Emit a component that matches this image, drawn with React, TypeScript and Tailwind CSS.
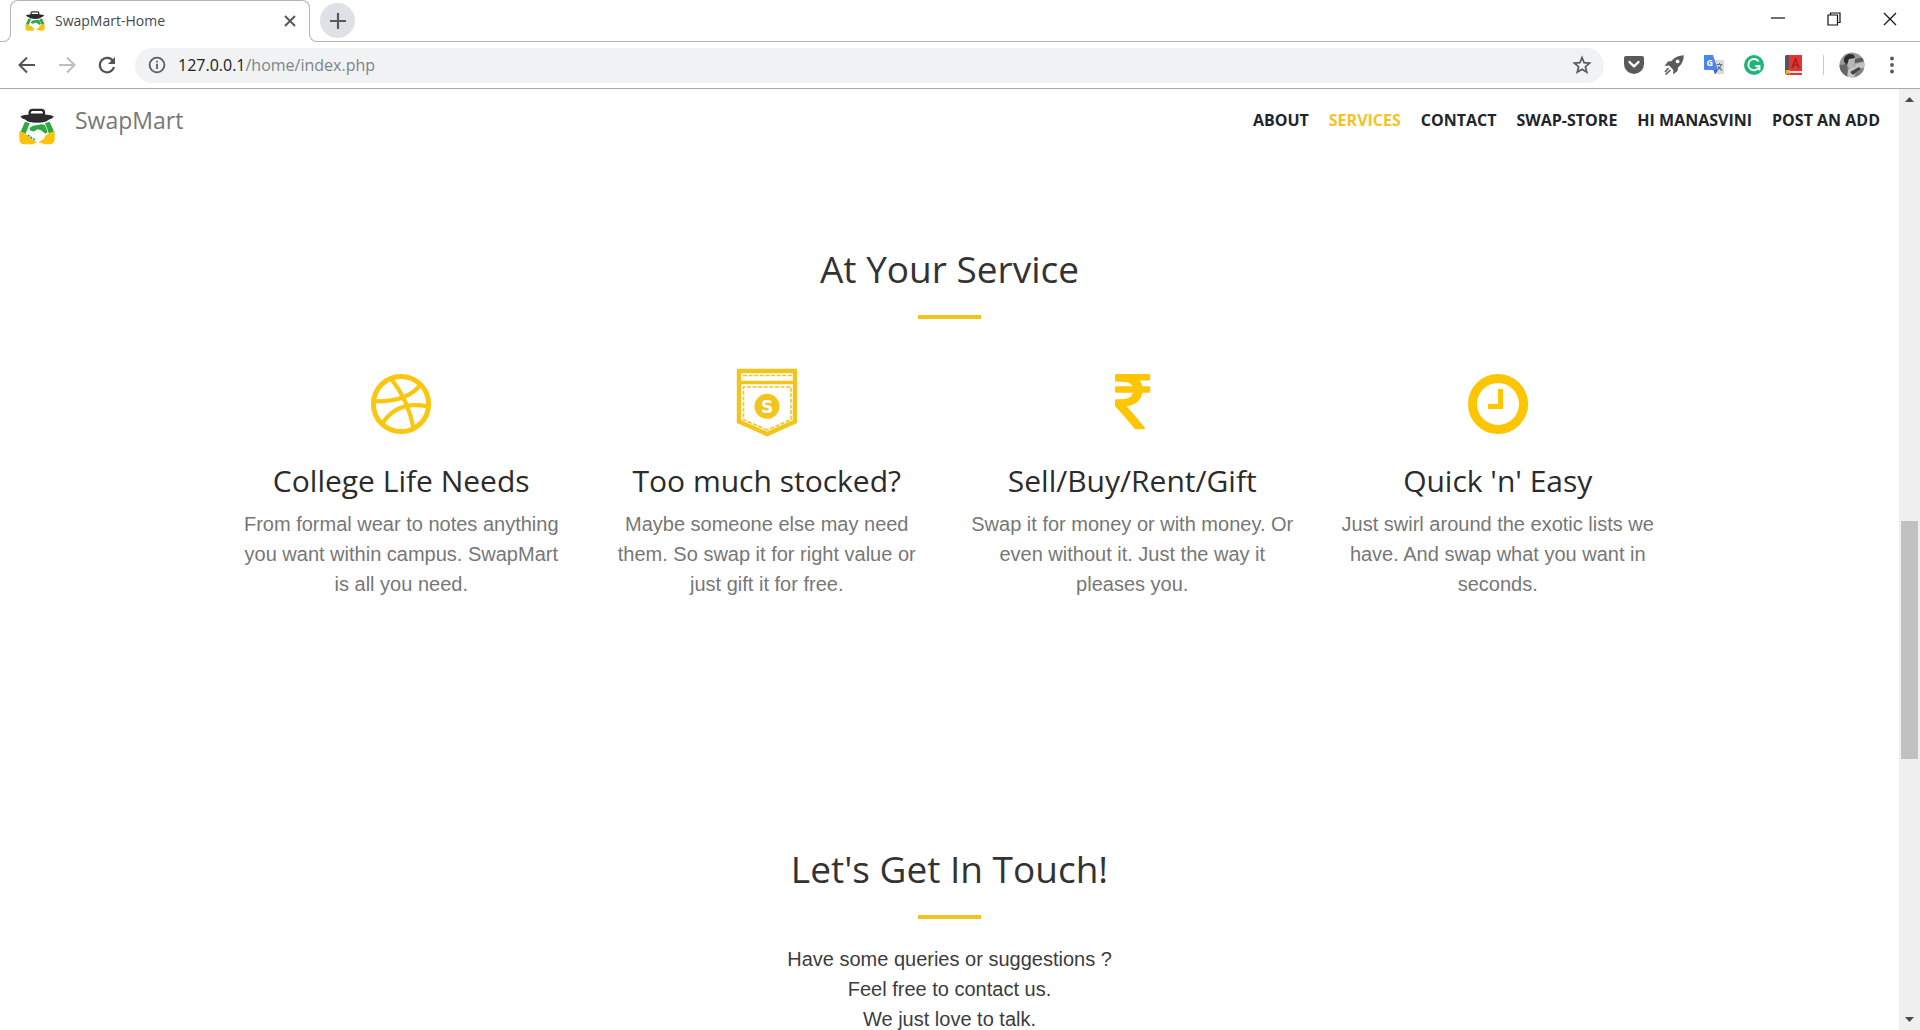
import React from 'react';

function Logo({ className }: { className: string }) {
  return (
    <svg viewBox="56 325 108 110" className={className} aria-hidden="true">
      <path d="M88 347V338Q88 330 97 330H123Q131 330 131 338V347" fill="none" stroke="#2c2c30" strokeWidth="7" />
      <path d="M60 350Q68 344 84 345L90 341H130L136 345Q152 344 161 350Q156 357 145 360L138 365Q111 373 82 365L76 360Q64 357 60 350Z" fill="#2c2c30" />
      <path d="M74 366L88 370L76 402L60 398Z" fill="#2fa745" />
      <path d="M134 370L148 366L162 397L146 402Z" fill="#2fa745" />
      <path d="M88 384Q98 375 109 376L122 373Q130 373 134 376L142 397L135 402Q122 389 112 388L100 395L89 392Z" fill="#2fa745" />
      <path d="M57 393L74 400L86 411Q98 423 110 428L104 430L98 433H70Q57 432 57 418Z" fill="#fcc30c" />
      <path d="M163 393L146 400L136 406L131 417L114 427L126 430L132 433H150Q163 432 163 418Z" fill="#fcc30c" />
      <path d="M83 405L88 410M91 411L95 416M99 416L103 421" stroke="#2fa745" strokeWidth="5" />
    </svg>
  );
}

const iconClass = 'mx-auto size-[72px]';

function BallIcon() {
  return (
    <svg viewBox="0 0 72 72" className={iconClass} fill="none" stroke="#fac60f" strokeWidth="4.2" aria-hidden="true">
      <circle cx="36" cy="36" r="27.6" strokeWidth="5" />
      <path d="M9 33.3Q43 34 55.5 16.5" />
      <path d="M26.5 11Q44 34 48.7 61" />
      <path d="M17 56Q32 32 63 38.5" />
    </svg>
  );
}

function PocketIcon() {
  return (
    <svg viewBox="0 0 72 72" className={iconClass} aria-hidden="true">
      <g fill="none" stroke="#f3c51c">
        <path d="M8 3H64V53.5L36 66L8 53.5Z" strokeWidth="4.4" />
        <path d="M8 14.5H64" strokeWidth="3.6" />
        <path d="M12 7.5H61" strokeWidth="1.4" strokeDasharray="4 1.6" />
        <path d="M36 62L12.5 51.5V19H60V51.5L36 62" strokeWidth="1.6" strokeDasharray="4 1.6" />
      </g>
      <circle cx="36" cy="38.3" r="12.5" fill="#f3c51c" />
      <text x="36" y="44.5" textAnchor="middle" fontSize="17" className="fill-white font-['DejaVu_Sans',sans-serif] font-bold">S</text>
    </svg>
  );
}

function RupeeIcon() {
  return (
    <svg viewBox="0 0 72 72" className={iconClass} aria-hidden="true">
      <path
        transform="translate(19 1) scale(.0393)"
        fill="#fec503"
        d="M898 470v102q0 14-9 23t-23 9h-168q-23 144-129 234t-276 110q167 178 459 536 14 16 4 34-8 18-29 18h-195q-16 0-25-12-306-367-498-571-9-9-9-22v-127q0-13 9.5-22.5t22.5-9.5h112q132 0 212.5-43t102.5-125h-427q-14 0-23-9t-9-23v-102q0-14 9-23t23-9h413q-57-113-268-113h-145q-13 0-22.5-9.5t-9.5-22.5v-133q0-14 9-23t23-9h832q14 0 23 9t9 23v102q0 14-9 23t-23 9h-233q47 61 64 144h171q14 0 23 9t9 23z"
      />
    </svg>
  );
}

function ClockIcon() {
  return (
    <svg viewBox="0 0 72 72" className={iconClass} aria-hidden="true">
      <circle cx="36" cy="36" r="25.5" fill="none" stroke="#fec503" strokeWidth="9" />
      <path d="M36 21H41V41H26V36H36Z" fill="#fec503" />
    </svg>
  );
}

const services = [
  { Icon: BallIcon, title: 'College Life Needs', text: 'From formal wear to notes anything you want within campus. SwapMart is all you need.' },
  { Icon: PocketIcon, title: 'Too much stocked?', text: 'Maybe someone else may need them. So swap it for right value or just gift it for free.' },
  { Icon: RupeeIcon, title: 'Sell/Buy/Rent/Gift', text: 'Swap it for money or with money. Or even without it. Just the way it pleases you.' },
  { Icon: ClockIcon, title: "Quick 'n' Easy", text: 'Just swirl around the exotic lists we have. And swap what you want in seconds.' },
];

const links = ['About', 'Services', 'Contact', 'Swap-Store', 'Hi Manasvini', 'Post an Add'];

function IconButton({ label, children }: { label: string; children: React.ReactNode }) {
  return (
    <button type="button" aria-label={label} className="flex size-10 shrink-0 items-center justify-center">
      {children}
    </button>
  );
}

function WindowButton({ label, d }: { label: string; d: string }) {
  return (
    <button type="button" aria-label={label} className="flex h-[37px] w-14 items-center justify-center">
      <svg viewBox="0 0 14 14" className="size-3.5" fill="none" stroke="#111" strokeWidth="1.2">
        <path d={d} />
      </svg>
    </button>
  );
}

function TabStrip() {
  return (
    <div className="flex h-[42px] shrink-0 bg-white">
      <div className="w-2.5 border-b border-[#b5b5b5]" />
      <div className="relative flex w-[300px] items-center rounded-t-lg border-x border-t border-[#b5b5b5] pr-[13px] pb-0.5 pl-3.5">
        <span className="absolute bottom-0 -left-2 size-2 bg-white">
          <span className="block h-2 w-2 rounded-br-lg border-r border-b border-[#b5b5b5]" />
        </span>
        <span className="absolute -right-2 bottom-0 size-2 bg-white">
          <span className="block h-2 w-2 rounded-bl-lg border-b border-l border-[#b5b5b5]" />
        </span>
        <Logo className="size-5" />
        <span className="ml-2.5 flex-1 text-sm text-[#45484c]">SwapMart-Home</span>
        <button type="button" aria-label="Close tab">
          <svg viewBox="0 0 12 12" className="size-3" stroke="#55585c" strokeWidth="2" fill="none">
            <path d="M1 1L11 11M11 1L1 11" />
          </svg>
        </button>
      </div>
      <div className="flex flex-1 items-start border-b border-[#b5b5b5] pr-0.5 pl-2.5">
        <button type="button" aria-label="New tab" className="mt-[3px] flex size-[35px] items-center justify-center rounded-full bg-[#dee1e6]">
          <svg viewBox="0 0 16 16" className="size-4" stroke="#55585c" strokeWidth="2.2" fill="none">
            <path d="M8 0V16M0 8H16" />
          </svg>
        </button>
        <div className="ml-auto flex">
          <WindowButton label="Minimize" d="M0 6H14" />
          <WindowButton label="Restore" d="M1 3H10.5V13H1ZM3.5 3V1H13V10.5H10.5" />
          <WindowButton label="Close" d="M1 1L13 13M13 1L1 13" />
        </div>
      </div>
    </div>
  );
}

function Toolbar() {
  return (
    <div className="flex h-[47px] shrink-0 items-center border-b border-[#a9a9a9] bg-white pr-2 pl-[7px]">
      <IconButton label="Back">
        <svg viewBox="0 0 18 18" className="size-[18px]" fill="none" stroke="#505357" strokeWidth="2">
          <path d="M17 9H2M9 1.5L1.5 9L9 16.5" />
        </svg>
      </IconButton>
      <IconButton label="Forward">
        <svg viewBox="0 0 18 18" className="size-[18px]" fill="none" stroke="#bcbec1" strokeWidth="2">
          <path d="M1 9H16M9 1.5L16.5 9L9 16.5" />
        </svg>
      </IconButton>
      <IconButton label="Reload">
        <svg viewBox="0 0 18 18" className="size-[18px]" fill="none" stroke="#505357" strokeWidth="2.2">
          <path d="M15 5A7.2 7.2 0 1 0 16 11" />
          <path d="M17 1V8H10Z" fill="#505357" stroke="none" />
        </svg>
      </IconButton>
      <form className="ml-2 flex h-[35px] flex-1 items-center rounded-full bg-[#f0f2f4] pl-[13px]" onSubmit={(e) => e.preventDefault()}>
        <svg viewBox="0 0 18 18" className="size-[18px] shrink-0" fill="none" stroke="#5c5f63" strokeWidth="1.8" aria-hidden="true">
          <circle cx="9" cy="9" r="7.4" />
          <path d="M9 7.8V13M9 4.8V6.6" />
        </svg>
        <a href="#url" aria-label="Address" className="ml-3 flex-1 text-base text-[#808387]">
          <span className="text-[#202124]">127.0.0.1</span>/home/index.php
        </a>
        <button type="button" aria-label="Bookmark this page" className="mr-3">
          <svg viewBox="0 0 20 20" className="size-5" fill="none" stroke="#55585c" strokeWidth="1.7">
            <path d="M10 2.5L12.1 7.7L17.6 8.1L13.4 11.7L14.7 17.1L10 14.2L5.3 17.1L6.6 11.7L2.4 8.1L7.9 7.7Z" />
          </svg>
        </button>
      </form>
      <div className="ml-2.5 flex items-center">
        <IconButton label="Pocket">
          <svg viewBox="0 0 20 20" className="size-5">
            <path d="M2 1H18Q20 1 20 3V9A10 10 0 0 1 0 9V3Q0 1 2 1Z" fill="#5a5a5a" />
            <path d="M5.5 7L10 11.3L14.5 7" fill="none" stroke="#fff" strokeWidth="2.4" strokeLinecap="round" strokeLinejoin="round" />
          </svg>
        </IconButton>
        <IconButton label="Rocket">
          <svg viewBox="0 0 20 20" className="size-5">
            <path d="M19.8 .2Q12 .3 7.5 6L4 6.5L.5 11L5 10.6L9.4 15L9 19.5L13.5 16L14 12.5Q19.7 8 19.8 .2Z" fill="#5a5a5a" />
            <circle cx="13.6" cy="6.4" r="1.9" fill="#fff" />
            <path d="M4.5 13L1 17M6.5 15L1.5 19.5" stroke="#5a5a5a" strokeWidth="1.6" />
          </svg>
        </IconButton>
        <IconButton label="Translate">
          <svg viewBox="0 0 20 20" className="size-5">
            <path d="M8 5H20V19H12Z" fill="#d9dcdf" />
            <path d="M0 0H9L14 15H1Q0 15 0 14Z" fill="#4a86ec" />
            <path d="M9.5 15H14L11 19.5Z" fill="#2f5fc0" />
            <path d="M12.5 9.5H18.5M15.5 8V9.5M17.3 9.5Q16.5 13 13.5 14.8M14 11.5L18 15.5" stroke="#66707a" strokeWidth="1.1" fill="none" />
            <text x="2.5" y="11" fontSize="9" className="fill-white font-bold">G</text>
          </svg>
        </IconButton>
        <IconButton label="Grammar check">
          <svg viewBox="0 0 20 20" className="size-5" fill="none">
            <circle cx="10" cy="10" r="10" fill="#1fb574" />
            <path d="M14.6 6.5A5.6 5.6 0 1 0 15.2 11.5M15.5 15.5V11H11" stroke="#fff" strokeWidth="1.9" />
          </svg>
        </IconButton>
        <IconButton label="Dictionary">
          <svg viewBox="0 0 20 20" className="size-5">
            <path d="M1 2Q1 0 3 0H18V20H3Q1 20 1 17Z" fill="#e2352f" />
            <path d="M1 2Q1 0 3 0H5V15H1Z" fill="#5c5254" />
            <path d="M5 16H18V18H5Z" fill="#f3e6e4" />
            <path d="M2 15H6V20L4 18L2 20Z" fill="#f1b32d" />
            <path d="M8 13L11.5 4L15 13M9.2 10H13.8" fill="none" stroke="#a31f1d" strokeWidth="1.6" />
          </svg>
        </IconButton>
        <span className="mr-2 ml-[9px] h-5 w-px bg-[#c9cacc]" />
        <IconButton label="Profile">
          <svg viewBox="0 0 26 26" className="size-[26px]">
            <defs>
              <clipPath id="avatar"><circle cx="13" cy="13" r="12.5" /></clipPath>
            </defs>
            <g clipPath="url(#avatar)">
              <path d="M0 0H26V26H0Z" fill="#9a9a9a" />
              <path d="M16 7L26 5V9L16 11Z" fill="#5b5b5b" />
              <path d="M16 12L26 10V15L17 17Z" fill="#c2c2c2" />
              <path d="M0 13L8 12L10 26H0Z" fill="#666" />
              <path d="M7 4Q13 1 16 6L15 13L17 17L12 19L8 13Z" fill="#b6b6b6" />
              <path d="M5 6Q9 0 15 3L16 6L10 7L8 13Q4 10 5 6Z" fill="#2c2c2c" />
              <path d="M9 18L16 15L20 18L14 26H8Z" fill="#c8c8c8" />
              <path d="M11 20L20 15L22 17L14 23Z" fill="#444" />
              <path d="M17 20L26 16V26H15Z" fill="#808080" />
            </g>
          </svg>
        </IconButton>
        <IconButton label="Menu">
          <svg viewBox="0 0 4 18" className="h-[18px] w-1" fill="#55585c">
            <circle cx="2" cy="2.5" r="1.9" />
            <circle cx="2" cy="9" r="1.9" />
            <circle cx="2" cy="15.5" r="1.9" />
          </svg>
        </IconButton>
      </div>
    </div>
  );
}

function SectionTitle({ children }: { children: React.ReactNode }) {
  return (
    <>
      <h2 className="text-[37px] leading-10 text-[#333]">{children}</h2>
      <hr className="mx-auto mt-[26px] h-1 w-[63px] border-0 bg-[#f0c520]" />
    </>
  );
}

function Scrollbar() {
  return (
    <div className="flex w-[21px] shrink-0 flex-col items-center bg-[#f0f0f0]">
      <button type="button" aria-label="Scroll up" className="flex h-[21px] items-center justify-center">
        <svg viewBox="0 0 9 5" className="h-[5px] w-[9px]" fill="#4a4a4a"><path d="M0 5L4.5 0L9 5Z" /></svg>
      </button>
      <div className="flex-[411]" />
      <div className="w-[17px] flex-[238] bg-[#c1c1c1]" />
      <div className="flex-[250]" />
      <button type="button" aria-label="Scroll down" className="flex h-[21px] items-center justify-center">
        <svg viewBox="0 0 9 5" className="h-[5px] w-[9px]" fill="#4a4a4a"><path d="M0 0L4.5 5L9 0Z" /></svg>
      </button>
    </div>
  );
}

export default function App() {
  return (
    <div className="flex h-screen flex-col overflow-hidden bg-white font-['Open_Sans',sans-serif]">
      <TabStrip />
      <Toolbar />
      <div className="flex min-h-0 flex-1">
        <div className="min-w-0 flex-1 overflow-hidden">
          <header className="flex h-16 items-start justify-between px-[19px] pt-[19px]">
            <a href="#home" className="flex items-start gap-5 text-[23px] leading-6 text-[#777]">
              <Logo className="h-[37px] w-9" />
              SwapMart
            </a>
            <nav className="flex gap-5 text-base leading-6 font-bold uppercase">
              {links.map((l) => (
                <a key={l} href={'#' + l.toLowerCase()} className={l === 'Services' ? 'text-[#f5c322]' : 'text-[#212529]'}>
                  {l}
                </a>
              ))}
            </nav>
          </header>
          <main className="text-center">
            <section className="pt-24 pb-[125px]">
              <SectionTitle>At Your Service</SectionTitle>
              <div className="mx-auto mt-[49px] grid max-w-[1462px] grid-cols-4">
                {services.map(({ Icon, title, text }) => (
                  <article key={title} className="px-[19px]">
                    <Icon />
                    <h3 className="mt-[23px] text-3xl leading-9 text-[#2b2b2b]">{title}</h3>
                    <p className="mt-2.5 font-['Liberation_Sans',sans-serif] text-xl leading-[30px] text-[#777]">{text}</p>
                  </article>
                ))}
              </div>
            </section>
            <section className="pt-[125px]">
              <SectionTitle>Let's Get In Touch!</SectionTitle>
              <p className="mt-[25px] font-['Liberation_Sans',sans-serif] text-xl leading-[30px] text-[#3c3c3c]">
                Have some queries or suggestions ?<br />
                Feel free to contact us.<br />
                We just love to talk.
              </p>
            </section>
          </main>
        </div>
        <Scrollbar />
      </div>
    </div>
  );
}
